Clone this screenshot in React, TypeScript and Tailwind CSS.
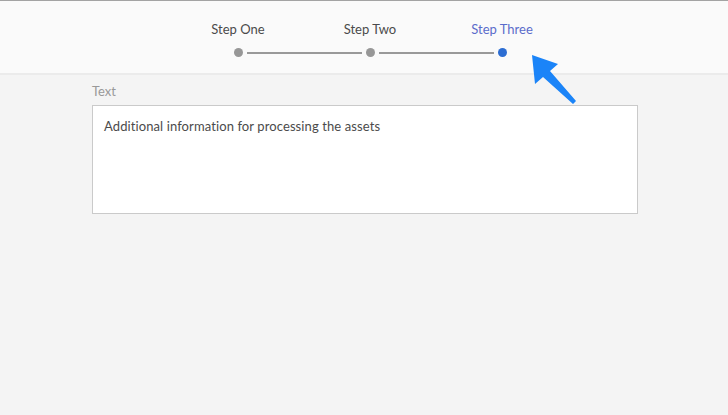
import React from 'react';

const steps = [
  { label: 'Step One', active: false },
  { label: 'Step Two', active: false },
  { label: 'Step Three', active: true },
];

function Stepper() {
  return (
    <div className="flex justify-center pl-[12px]">
      {steps.map((step, i) => (
        <div key={step.label} className="flex w-[132px] flex-col items-center">
          <span
            className={
              'text-[13px] leading-[16px] ' + (step.active ? 'text-[#5a6ccb]' : 'text-[#4b4b4b]')
            }
          >
            {step.label}
          </span>
          <div className="mt-[11px] flex w-full items-center">
            <div className={'h-[2px] flex-1 ' + (i > 0 ? 'bg-[#999999]' : 'bg-transparent')} />
            <div
              className={
                'mx-[4px] h-[9px] w-[9px] rounded-full ' +
                (step.active ? 'bg-[#2c6dd2]' : 'bg-[#979797]')
              }
            />
            <div
              className={
                'h-[2px] flex-1 ' + (i < steps.length - 1 ? 'bg-[#999999]' : 'bg-transparent')
              }
            />
          </div>
        </div>
      ))}
    </div>
  );
}

function Arrow() {
  return (
    <svg
      className="absolute left-[525px] top-[50px]"
      width="60"
      height="60"
      viewBox="525 50 60 60"
    >
      <polygon
        points="532,55 558,64 550,71 576,101 573,104 543,77 535,84"
        fill="#1b84f8"
      />
    </svg>
  );
}

export default function App() {
  return (
    <div
      className="relative h-[415px] w-[728px] overflow-hidden bg-[#f4f4f4]"
      style={{ fontFamily: 'Lato, "Open Sans", sans-serif' }}
    >
      <header className="h-[75px] border-t border-t-[#a3a3a3] border-b-2 border-b-[#ebebeb] bg-[#fafafa] pt-[20px]">
        <Stepper />
      </header>
      <main className="pl-[92px] pt-[8px]">
        <label className="block text-[13px] leading-[16px] text-[#999999]">Text</label>
        <div className="mt-[6px] h-[109px] w-[546px] border border-[#cacaca] bg-white px-[11px] pt-[12px] text-[13px] leading-[16px] tracking-[0.1px] text-[#4b4b4b]">
          Additional information for processing the assets
        </div>
      </main>
      <Arrow />
    </div>
  );
}
